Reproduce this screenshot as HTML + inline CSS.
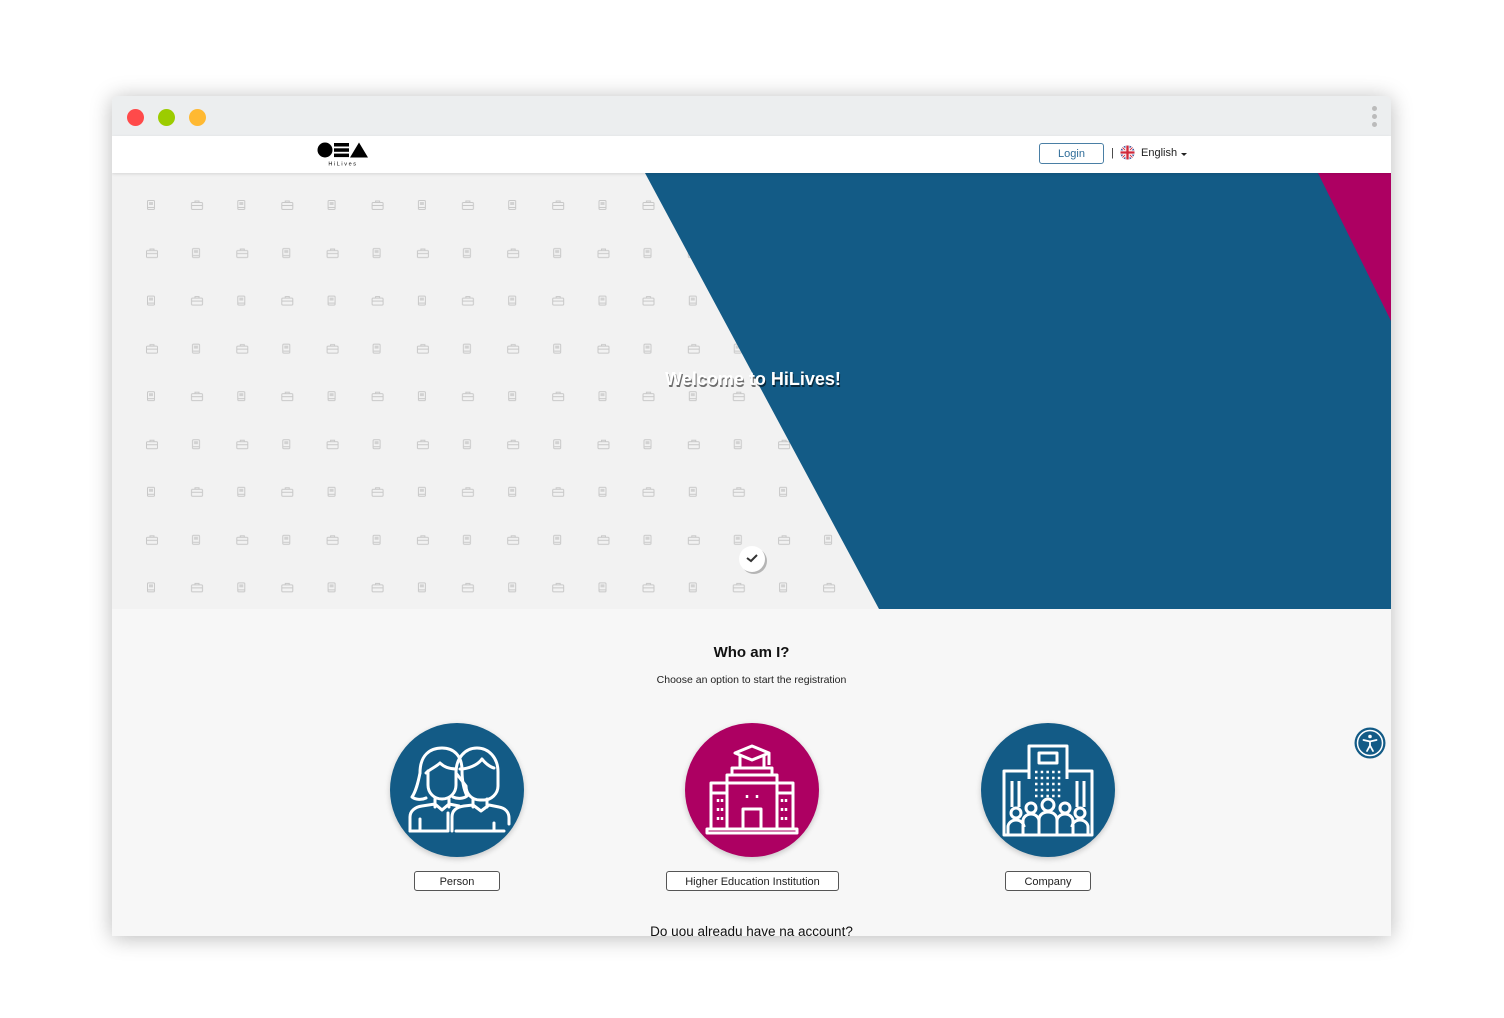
<!DOCTYPE html>
<html><head><meta charset="utf-8">
<style>
html,body{margin:0;padding:0;background:#fff;width:1504px;height:1018px;overflow:hidden;font-family:"Liberation Sans",sans-serif}
.win{position:absolute;left:112px;top:96px;width:1279px;height:840px;background:#f7f7f7;box-shadow:0 2px 22px rgba(0,0,0,.28);overflow:hidden;border-radius:6px 6px 0 0}
.bar{position:absolute;left:0;top:0;width:100%;height:40px;background:#eceeef}
.dot{position:absolute;top:13px;width:17px;height:17px;border-radius:50%}
.nav{position:absolute;left:0;top:40px;width:100%;height:37px;background:#fff;box-shadow:0 1px 3px rgba(0,0,0,.12);z-index:2}
.hero{position:absolute;left:0;top:77px;width:1279px;height:436px}
.t{position:absolute;width:100%;text-align:center;color:#111}
.circ{position:absolute;top:627px;width:134px;height:134px;border-radius:50%;box-shadow:0 2px 6px rgba(0,0,0,.2)}
.btn{position:absolute;top:775px;height:20px;border:1px solid #555;border-radius:3px;background:#fff;font-size:11px;line-height:20px;text-align:center;color:#222;box-sizing:border-box}
</style></head><body>
<div class="win">
 <div class="bar">
  <div class="dot" style="left:15px;background:#ff4a4a"></div>
  <div class="dot" style="left:46px;background:#9ccc00"></div>
  <div class="dot" style="left:77px;background:#ffb932"></div>
  <div style="position:absolute;right:14px;top:10px;width:5px">
   <div style="width:5px;height:5px;border-radius:50%;background:#bbb;margin-bottom:3px"></div>
   <div style="width:5px;height:5px;border-radius:50%;background:#bbb;margin-bottom:3px"></div>
   <div style="width:5px;height:5px;border-radius:50%;background:#bbb"></div>
  </div>
 </div>
 <div class="nav">
  <svg style="position:absolute;left:205px;top:5px" width="52" height="26" viewBox="0 0 52 26">
   <circle cx="8" cy="9" r="7.5" fill="#000"/>
   <rect x="17" y="2" width="15" height="3.5" fill="#000"/><rect x="17" y="7.3" width="15" height="3.5" fill="#000"/><rect x="17" y="12.6" width="15" height="3.5" fill="#000"/>
   <polygon points="42,1.5 51,16.5 33,16.5" fill="#000"/>
   <text x="26" y="24.5" font-size="5.5" text-anchor="middle" letter-spacing="1.6" font-family="Liberation Sans" fill="#000">HiLives</text>
  </svg>
  <div style="position:absolute;left:927px;top:7px;width:63px;height:19px;border:1px solid #4a7fa5;border-radius:3px;font-size:11px;color:#2f6d99;text-align:center;line-height:20px">Login</div>
  <div style="position:absolute;left:999px;top:11px;font-size:11px;color:#333">|</div>
  <svg style="position:absolute;left:1008px;top:9px" width="15" height="15" viewBox="0 0 16 16">
   <clipPath id="fc"><circle cx="8" cy="8" r="7.5"/></clipPath>
   <g clip-path="url(#fc)"><rect width="16" height="16" fill="#2b3f8f"/>
   <path d="M0 0L16 16M16 0L0 16" stroke="#fff" stroke-width="3"/><path d="M0 0L16 16M16 0L0 16" stroke="#d0283a" stroke-width="1"/>
   <path d="M8 0V16M0 8H16" stroke="#fff" stroke-width="4.5"/><path d="M8 0V16M0 8H16" stroke="#d0283a" stroke-width="2.5"/></g>
  </svg>
  <div style="position:absolute;left:1029px;top:11px;font-size:11px;color:#222">English</div>
  <div style="position:absolute;left:1069px;top:17px;border-left:3px solid transparent;border-right:3px solid transparent;border-top:3px solid #222"></div>
 </div>
 <svg class="hero" width="1279" height="436" viewBox="0 0 1279 436">
  <defs>
   <g id="bk"><rect x="0.5" y="0.5" width="7" height="9" rx="1" fill="none" stroke="#c8c8c8" stroke-width="1"/><rect x="2" y="2" width="4" height="3" fill="#d2d2d2"/><line x1="1" y1="7.5" x2="7" y2="7.5" stroke="#c8c8c8"/></g>
   <g id="bc"><rect x="0.5" y="2.5" width="11" height="7" rx="1" fill="none" stroke="#c8c8c8"/><path d="M4 2.5V1h4v1.5M0.5 5.5h11" fill="none" stroke="#c8c8c8"/></g>
   <pattern id="pt" x="34" y="27" width="90.3" height="95.6" patternUnits="userSpaceOnUse">
    <use href="#bk" x="1" y="0"/><use href="#bc" x="45" y="0"/>
    <use href="#bc" x="0" y="48"/><use href="#bk" x="46" y="48"/>
   </pattern>
  </defs>
  <rect width="1279" height="436" fill="#f2f2f2"/>
  <rect x="20" y="15" width="780" height="421" fill="url(#pt)"/>
  <polygon points="533,0 1279,0 1279,436 767,436" fill="#135b86"/>
  <polygon points="1206,0 1279,0 1279,148" fill="#ad0062"/>
  <text x="642" y="214" text-anchor="middle" font-size="18" font-weight="bold" fill="#000" opacity=".55" font-family="Liberation Sans">Welcome to HiLives!</text>
  <text x="641" y="212" text-anchor="middle" font-size="18" font-weight="bold" fill="#fff" font-family="Liberation Sans">Welcome to HiLives!</text>
  <circle cx="642" cy="388" r="13" fill="#000" opacity=".25"/>
  <circle cx="640" cy="386" r="13" fill="#fff"/>
  <path d="M635 385l4 3 6-6" stroke="#333" stroke-width="2" fill="none"/>
 </svg>
 <div class="t" style="top:548px;font-size:15px;font-weight:bold">Who am I?</div>
 <div class="t" style="top:578px;font-size:10.5px;color:#222">Choose an option to start the registration</div>

 <div class="circ" style="left:278px;background:#135b86">
  <svg width="134" height="134" viewBox="0 0 134 134" fill="none" stroke="#fff" stroke-width="3" stroke-linecap="round" stroke-linejoin="round">
   <path d="M30 50c0-18 10-25 22-25s20 8 20 22c0 10 2 20 5 26-4 3-10 3-14 1"/>
   <path d="M30 50c-2 10-4 18-8 24 4 3 10 3 14 1"/>
   <path d="M36 50c4-4 10-6 14-10 4 4 10 6 16 6"/>
   <path d="M38 48v14c0 8 6 14 14 14s14-6 14-14V48"/>
   <path d="M45 76v8M59 76v8M20 108V94c0-6 5-10 12-11l13-2 7 6 7-6 10 2"/>
   <path d="M66 50c0-15 9-25 21-25s21 10 21 24v14c0 8-7 14-14 14h-4c-8 0-14-6-14-14z"/>
   <path d="M70 46c8 0 18-4 22-10 3 4 8 8 12 9"/>
   <path d="M83 76v8M97 76v8M62 108V94c0-7 5-10 12-11l9-1 8 6 8-6 10 2c6 1 10 5 10 11v6"/>
   <path d="M30 96v12M104 100v8M20 108h38M66 108h48M58 90v18"/>
  </svg>
 </div>
 <div class="circ" style="left:573px;background:#ad0062">
  <svg width="134" height="134" viewBox="0 0 134 134" fill="none" stroke="#fff" stroke-width="3" stroke-linejoin="round">
   <path d="M50 30l17-7 17 7-17 7z"/><path d="M55 33v12h24V33M84 30v12"/>
   <path d="M47 52h40v-7H47z"/><path d="M42 60h50v-8H42z"/>
   <path d="M26 70h16v-10H26zM92 70h16v-10H92z"/>
   <path d="M26 70v36h82V70M42 60v46M92 60v46"/>
   <path d="M58 106V86h18v20"/>
   <path d="M22 110h90v-4H22z"/>
   <path d="M33 76v3M37 76v3M33 85v3M37 85v3M33 94v3M37 94v3M97 76v3M101 76v3M97 85v3M101 85v3M97 94v3M101 94v3M62 72v3M72 72v3" stroke-width="2.5"/>
  </svg>
 </div>
 <div class="circ" style="left:869px;background:#135b86">
  <svg width="134" height="134" viewBox="0 0 134 134" fill="none" stroke="#fff" stroke-width="3" stroke-linejoin="round">
   <path d="M48 56V23h38v33"/><rect x="58" y="30" width="18" height="10"/>
   <path d="M48 48H23v64h88V48H86"/>
   <path d="M31 58v26M38 58v26M96 58v26M103 58v26"/>
   <g stroke-width="2.5" stroke-dasharray="2.5 3.2"><path d="M54 49h28M54 55h28M54 61h28M54 67h28M54 73h28"/></g>
   <circle cx="35" cy="90" r="5"/><circle cx="50" cy="85" r="5"/><circle cx="67" cy="82" r="6"/><circle cx="84" cy="85" r="5"/><circle cx="99" cy="90" r="5"/>
   <path d="M27 112v-8c0-4 4-7 8-7s8 3 8 7M42 112V98c0-4 4-7 8-7s8 3 8 7M58 112V97c0-5 4-8 9-8s9 3 9 8v15M76 98c0-4 4-7 8-7s8 3 8 7v14M91 104c0-4 4-7 8-7s8 3 8 7v8"/>
  </svg>
 </div>
 <div class="btn" style="left:302px;width:86px">Person</div>
 <div class="btn" style="left:554px;width:173px">Higher Education Institution</div>
 <div class="btn" style="left:893px;width:86px">Company</div>
 <div class="t" style="top:828px;font-size:13.5px">Do uou alreadu have na account?</div>

 <svg style="position:absolute;left:1242px;top:631px" width="32" height="32" viewBox="0 0 32 32">
  <circle cx="16" cy="16" r="15.5" fill="#135b86"/><circle cx="16" cy="16" r="12.5" fill="none" stroke="#fff" stroke-width="1.5"/>
  <circle cx="16" cy="9.5" r="1.8" fill="#fff"/>
  <path d="M9.5 13l6.5 1.5 6.5-1.5M16 14.5v4l-3 5.5M16 18.5l3 5.5" stroke="#fff" stroke-width="1.8" fill="none" stroke-linecap="round"/>
 </svg>
</div>
</body></html>
